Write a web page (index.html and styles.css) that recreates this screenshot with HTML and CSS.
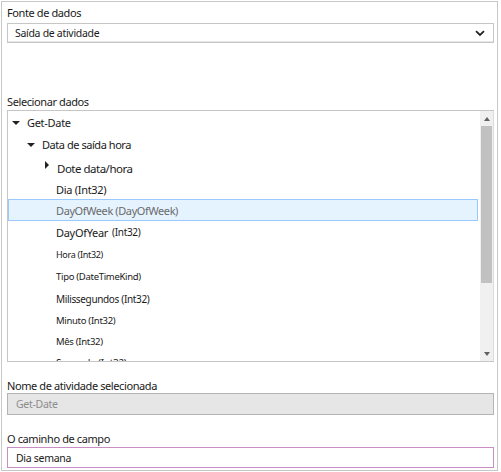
FILE: index.html
```html
<!DOCTYPE html>
<html lang="pt">
<head>
<meta charset="utf-8">
<link rel="stylesheet" href="styles.css">
</head>
<body>
<div class="frame">
  <div class="label first">Fonte de dados</div>
  <div class="select">
    <span>Saída de atividade</span>
    <svg class="chev" width="10" height="7" viewBox="0 0 10 7"><path d="M1 1.2 L5 5 L9 1.2" fill="none" stroke="#222" stroke-width="1.8"/></svg>
  </div>
  <div class="label sel-label">Selecionar dados</div>
  <div class="tree">
    <div class="list">
      <div class="row r1"><span class="tri down"></span><span class="a">Get-Date</span></div>
      <div class="row r2"><span class="tri down"></span><span class="b">Data de saída hora</span></div>
      <div class="row r3"><span class="tri right"></span><span class="c">Dote data/hora</span></div>
      <div class="row leaf h20"><span class="a">Dia (Int32)</span></div>
      <div class="row leaf selected"><span class="d dim">DayOfWeek (DayOfWeek)</span></div>
      <div class="row leaf"><span class="a">DayOfYear</span>&nbsp;<span class="e">(Int32)</span></div>
      <div class="row leaf"><span class="f">Hora (Int32)</span></div>
      <div class="row leaf h23"><span class="g">Tipo (DateTimeKind)</span></div>
      <div class="row leaf h21"><span class="m">Milissegundos (Int32)</span></div>
      <div class="row leaf"><span class="g">Minuto (Int32)</span></div>
      <div class="row leaf h21"><span class="g">Mês (Int32)</span></div>
      <div class="row leaf"><span class="e">Segundo (Int32)</span></div>
    </div>
    <div class="scrollbar">
      <div class="arrow"><span class="up"></span></div>
      <div class="thumb"></div>
      <div class="track"></div>
      <div class="arrow"><span class="dn"></span></div>
    </div>
  </div>
  <div class="label l3">Nome de atividade selecionada</div>
  <div class="input disabled">Get-Date</div>
  <div class="label l4">O caminho de campo</div>
  <div class="input focus">Dia semana</div>
</div>
</body>
</html>
```
FILE: styles.css
```css
html, body { margin: 0; padding: 0; background: #fff; }
body { font-family: "Noto Sans", "Open Sans", sans-serif; color: #1a1a1a; }
.frame {
  margin: 1px;
  width: 497px;
  height: 470px;
  box-sizing: border-box;
  border: 1px solid #c8c8c8;
  padding: 3px 3px 0 5px;
  display: flex;
  flex-direction: column;
}
.label { font-size: 11px; line-height: 15px; height: 15px; letter-spacing: -0.4px; }
.select {
  margin-top: 3px;
  height: 20px;
  box-sizing: border-box;
  border: 1px solid #c6c6c6;
  box-shadow: inset 0 -1px 0 #e6e6e6;
  display: flex;
  align-items: center;
  justify-content: space-between;
  padding: 0 8px 0 7px;
  font-size: 10.5px;
  letter-spacing: -0.3px;
}
.chev { margin-top: 1px; }
.sel-label { margin-top: 51px; }
.tree {
  margin-top: 1px;
  height: 252px;
  box-sizing: border-box;
  border: 1px solid #c6c6c6;
  border-right: none;
  display: flex;
}
.list { flex: 1; overflow: hidden; letter-spacing: -0.3px; }
.row {
  height: 22px;
  display: flex;
  align-items: center;
  white-space: nowrap;
  box-sizing: border-box;
  border: 1px solid transparent;
}
.h20 { height: 20px; }
.h21 { height: 21px; }
.h23 { height: 23px; }
.r1 { padding-left: 3px; height: 24px; padding-bottom: 1px; }
.r2 { padding-left: 18px; height: 19px; }
.r3 { padding-left: 36px; height: 25px; padding-top: 4px; }
.leaf { padding-left: 47px; }
.selected { background: #e5f3ff; border-color: #99c9ff; margin-right: 2px; }
.tri { display: inline-block; width: 0; height: 0; }
.tri.down { border-left: 4px solid transparent; border-right: 4px solid transparent; border-top: 4px solid #222; margin-right: 7px; }
.tri.right { border-top: 4px solid transparent; border-bottom: 4px solid transparent; border-left: 4px solid #222; margin-right: 8px; margin-top: -7px; }
.a { font-size: 11px; }
.b { font-size: 11px; letter-spacing: -0.45px; }
.c { font-size: 11.5px; letter-spacing: -0.5px; }
.d { font-size: 11px; letter-spacing: -0.4px; }
.e { font-size: 10px; }
.f { font-size: 9px; }
.g { font-size: 9.5px; }
.m { font-size: 10px; letter-spacing: -0.35px; }
.dim { color: #6a6a6a; }
.scrollbar {
  width: 13px;
  background: #f0f0f0;
  display: flex;
  flex-direction: column;
  border-right: 1px solid #dcdcdc;
}
.arrow { height: 15px; display: flex; align-items: center; justify-content: center; }
.up { width: 0; height: 0; border-left: 3.5px solid transparent; border-right: 3.5px solid transparent; border-bottom: 4px solid #606060; }
.dn { width: 0; height: 0; border-left: 3.5px solid transparent; border-right: 3.5px solid transparent; border-top: 4px solid #606060; }
.thumb { height: 157px; background: #c1c1c1; margin: 0 1px; }
.track { flex: 1; }
.l3 { margin-top: 16px; }
.input {
  height: 22px;
  box-sizing: border-box;
  display: flex;
  align-items: center;
  padding-left: 8px;
  font-size: 10.5px;
  letter-spacing: -0.3px;
}
.disabled { margin-top: 0; background: #e6e6e6; border: 1px solid #b4b4b4; color: #8c8c8c; }
.l4 { margin-top: 16px; }
.focus { margin-top: 1px; height: 21px; border: 1px solid #c98ec6; }
```
